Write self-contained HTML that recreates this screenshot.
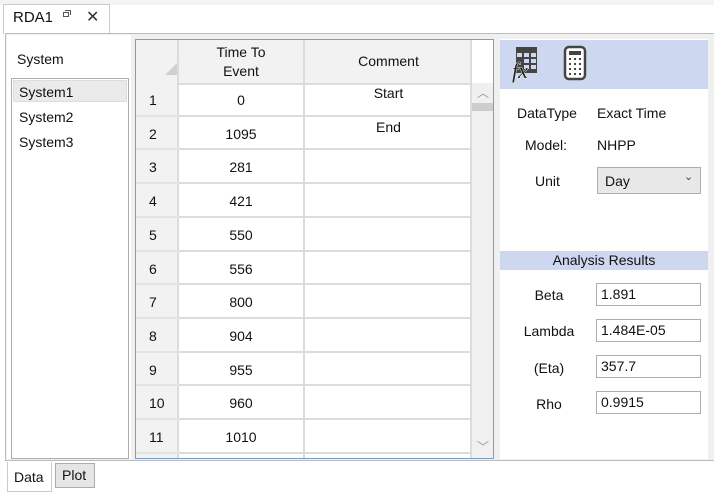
<!DOCTYPE html>
<html><head><style>
body{margin:0;width:714px;height:493px;background:#fff;font-family:"Liberation Sans",sans-serif;font-size:14px;color:#111;position:relative;overflow:hidden}
.a{position:absolute}
.t{position:absolute;text-align:center}
.box{position:absolute;border:1px solid #adadad;background:#fff;box-sizing:border-box;padding-left:4px;line-height:20px;font-size:14px}
.lbl{position:absolute;width:90px;text-align:center;left:504px}
</style></head><body>
<div class="a" style="left:0;top:0;width:714px;height:5px;background:#f3f3f3"></div>
<div class="a" style="left:3px;top:4px;width:105px;height:29px;border:1px solid #ccc;border-bottom:none;background:#fff"></div>
<div class="a" style="left:13px;top:9px;font-size:15px">RDA1</div>
<div class="a" style="left:63px;top:12px;width:6px;height:5px;border:1px solid #555;box-sizing:border-box"></div>
<div class="a" style="left:65px;top:10px;width:6px;height:5px;border-top:1px solid #555;border-right:1px solid #555;box-sizing:border-box"></div>
<div class="a" style="left:86px;top:7px;font-size:16px;color:#333">✕</div>
<div class="a" style="left:5px;top:33px;width:709px;height:428px;border:1px solid #bcbcbc;border-right:none;background:#f0f0f0;box-sizing:border-box"></div>
<div class="a" style="left:7px;top:35px;width:124px;height:424px;background:#fff"></div>
<div class="a" style="left:17px;top:51px">System</div>
<div class="a" style="left:11px;top:78px;width:118px;height:381px;border:1px solid #acacac;background:#fff;box-sizing:border-box"></div>
<div class="a" style="left:13px;top:80px;width:114px;height:22px;background:#eaeaea;border:1px solid #ddd;box-sizing:border-box"></div>
<div class="a" style="left:19px;top:84px">System1</div>
<div class="a" style="left:19px;top:109px">System2</div>
<div class="a" style="left:19px;top:134px">System3</div>
<div class="a" style="left:135px;top:39px;width:359px;height:420px;border:1px solid #7e9dc4;background:#fff;box-sizing:border-box;overflow:hidden">
 <div class="a" style="left:0;top:0;width:336px;height:43px;background:#f2f2f2;border-bottom:2px solid #dcdcdc"></div>
 <div class="a" style="left:167px;top:0;width:2px;height:420px;background:#dcdcdc"></div>
 <div class="a" style="left:0;top:0;width:43px;height:420px;background:#f2f2f2;border-right:2px solid #dcdcdc;box-sizing:border-box"></div>
 <div class="a" style="left:29px;top:23px;width:0;height:0;border-left:12px solid transparent;border-bottom:12px solid #d0d0d0"></div>
 <div class="t" style="left:43px;top:3px;width:124px;line-height:19px">Time To<br>Event</div>
 <div class="t" style="left:169px;top:13px;width:167px">Comment</div>
 <div class="a" style="left:334px;top:0;width:2px;height:420px;background:#dcdcdc"></div>
 <div class="a" style="left:336px;top:43px;width:22px;height:377px;background:#f0f0f0"></div>
 <div class="a" style="left:336px;top:63px;width:22px;height:8px;background:#cdcdcd"></div>
 <div class="t" style="left:336px;top:44px;width:22px;color:#999;font-size:12px">︿</div>
 <div class="t" style="left:336px;top:398px;width:22px;color:#999;font-size:12px">﹀</div>
 <div id="rows"></div>
</div>
<div class="a" style="left:500px;top:39px;width:208px;height:420px;background:#fff"></div>
<div class="a" style="left:500px;top:40px;width:208px;height:49px;background:#cdd7ef"></div>
<svg class="a" style="left:512px;top:45px;overflow:visible" width="28" height="36" viewBox="0 0 28 36">
 <rect x="4" y="2" width="21" height="26" fill="#444"/>
 <g fill="#cdd7ef"><rect x="5" y="8" width="5" height="4"/><rect x="12" y="8" width="5" height="4"/><rect x="19" y="8" width="5" height="4"/><rect x="12" y="14" width="5" height="4"/><rect x="19" y="14" width="5" height="4"/><rect x="12" y="20" width="5" height="4"/><rect x="19" y="20" width="5" height="4"/></g>
 <text x="0" y="33" font-family="Liberation Serif" font-style="italic" font-size="22" fill="#222" stroke="#fff" stroke-width="0.8" paint-order="stroke">fx</text>
</svg>
<svg class="a" style="left:563px;top:45px" width="24" height="36" viewBox="0 0 24 36">
 <rect x="2" y="2" width="20" height="32" rx="4" fill="#fff" stroke="#444" stroke-width="2.5"/>
 <rect x="6" y="6" width="12" height="4" fill="#444"/>
 <g fill="#444"><rect x="6" y="13" width="2" height="2"/><rect x="11" y="13" width="2" height="2"/><rect x="16" y="13" width="2" height="2"/><rect x="6" y="18" width="2" height="2"/><rect x="11" y="18" width="2" height="2"/><rect x="16" y="18" width="2" height="2"/><rect x="6" y="23" width="2" height="2"/><rect x="11" y="23" width="2" height="2"/><rect x="16" y="23" width="2" height="2"/><rect x="6" y="28" width="2" height="2"/><rect x="11" y="28" width="2" height="2"/><rect x="16" y="28" width="2" height="2"/></g>
</svg>
<div class="a" style="left:517px;top:105px">DataType</div>
<div class="a" style="left:597px;top:105px">Exact Time</div>
<div class="a" style="left:525px;top:137px">Model:</div>
<div class="a" style="left:597px;top:137px">NHPP</div>
<div class="a" style="left:535px;top:173px">Unit</div>
<div class="a" style="left:597px;top:167px;width:104px;height:27px;background:#e8e8e8;border:1px solid #adadad;box-sizing:border-box;padding:5px 0 0 7px">Day</div>
<div class="a" style="left:684px;top:170px;font-size:11px;color:#444">⌄</div>
<div class="a" style="left:500px;top:251px;width:208px;height:19px;background:#cdd7ef;text-align:center;line-height:19px">Analysis Results</div>
<div class="lbl" style="top:287px">Beta</div><div class="box" style="left:596px;top:283px;width:105px;height:23px">1.891</div>
<div class="lbl" style="top:323px">Lambda</div><div class="box" style="left:596px;top:319px;width:105px;height:23px">1.484E-05</div>
<div class="lbl" style="top:360px">(Eta)</div><div class="box" style="left:596px;top:355px;width:105px;height:23px">357.7</div>
<div class="lbl" style="top:396px">Rho</div><div class="box" style="left:596px;top:391px;width:105px;height:23px">0.9915</div>
<div class="a" style="left:7px;top:462px;width:45px;height:30px;background:#fff;border:1px solid #ccc;border-top:none;box-sizing:border-box"></div>
<div class="a" style="left:14px;top:469px">Data</div>
<div class="a" style="left:55px;top:463px;width:40px;height:25px;background:#e5e5e5;border:1px solid #acacac;box-sizing:border-box"></div>
<div class="a" style="left:62px;top:467px">Plot</div>
<script>
var v=["0","1095","281","421","550","556","800","904","955","960","1010",""];
var c=["Start","End"];
var h="";
for(var i=0;i<12;i++){var y=43+i*33.7;
h+='<div class="a" style="left:43px;top:'+(y+31.7)+'px;width:293px;height:2px;background:#dcdcdc"></div>';
h+='<div class="a" style="left:0;top:'+(y+31.7)+'px;width:43px;height:2px;background:#e3e3e3"></div>';
if(i<11){h+='<div class="a" style="left:13px;top:'+(y+9)+'px">'+(i+1)+'</div>';
h+='<div class="t" style="left:43px;top:'+(y+9)+'px;width:124px">'+v[i]+'</div>';}
if(c[i])h+='<div class="t" style="left:169px;top:'+(y+2)+'px;width:167px">'+c[i]+'</div>';}
document.getElementById("rows").innerHTML=h;
</script>
</body></html>
